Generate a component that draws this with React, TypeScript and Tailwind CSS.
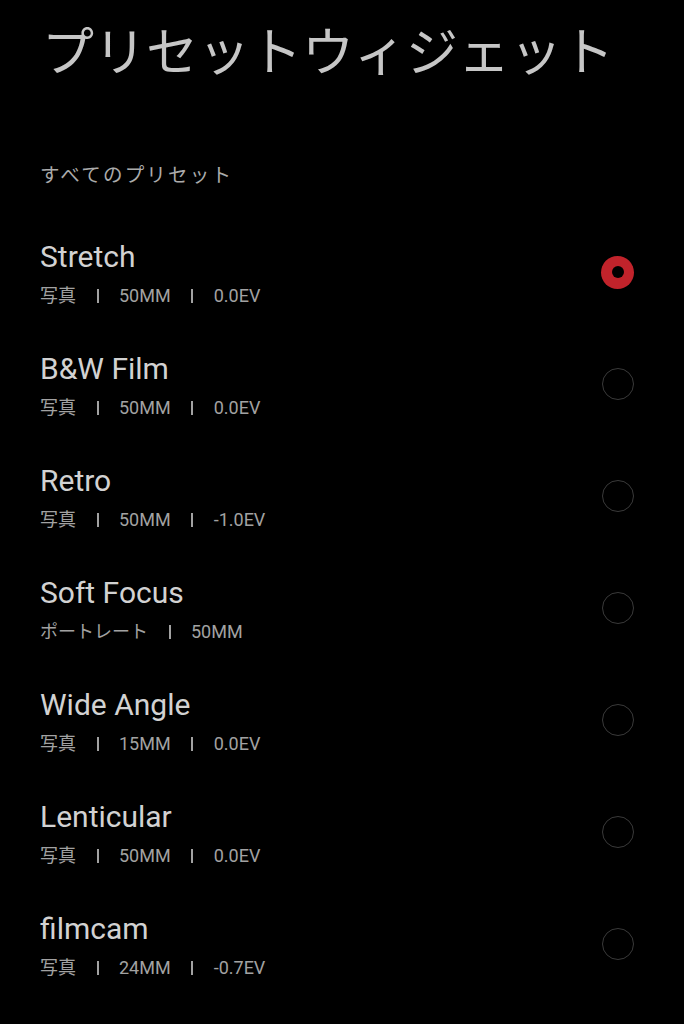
import React, { useState } from 'react';

type Preset = {
  name: string;
  tags: string[];
};

const presets: Preset[] = [
  { name: 'Stretch', tags: ['写真', '50MM', '0.0EV'] },
  { name: 'B&W Film', tags: ['写真', '50MM', '0.0EV'] },
  { name: 'Retro', tags: ['写真', '50MM', '-1.0EV'] },
  { name: 'Soft Focus', tags: ['ポートレート', '50MM'] },
  { name: 'Wide Angle', tags: ['写真', '15MM', '0.0EV'] },
  { name: 'Lenticular', tags: ['写真', '50MM', '0.0EV'] },
  { name: 'filmcam', tags: ['写真', '24MM', '-0.7EV'] },
];

const Radio = ({ checked }: { checked: boolean }) =>
  checked ? (
    <div className="w-[33px] h-[33px] rounded-full bg-[#c1232b] flex items-center justify-center">
      <div className="w-[12px] h-[12px] rounded-full bg-black" />
    </div>
  ) : (
    <div className="w-[32px] h-[32px] rounded-full border-[1.5px] border-[#3a3a3a]" />
  );

export default function App() {
  const [selected, setSelected] = useState(0);

  return (
    <div className="min-h-screen w-full bg-black font-['Roboto','Noto_Sans_CJK_JP',sans-serif] overflow-hidden">
      {/* Header */}
      <div className="h-[216px] pl-[42px] pt-[19px]">
        <h1 className="text-[52px] leading-[70px] text-[#c6c6c6] font-normal">プリセットウィジェット</h1>
        <p className="mt-[74px] ml-[-2px] text-[19.5px] leading-[26px] tracking-[2.2px] text-[#ababab]">すべてのプリセット</p>
      </div>

      {/* Preset list */}
      <div className="flex flex-col">
        {presets.map((p, i) => (
          <div
            key={p.name}
            onClick={() => setSelected(i)}
            className="h-[112px] pl-[40px] pr-[50px] flex items-center justify-between cursor-pointer"
          >
            <div className="flex flex-col pt-[2px]">
              <span className="text-[30px] leading-[36px] text-[#d2d2d2]">{p.name}</span>
              <div className="mt-[9px] flex items-center text-[18px] leading-[24px] text-[#a2a2a2]">
                {p.tags.map((t, j) => (
                  <React.Fragment key={j}>
                    {j > 0 && <span className="mx-[20.5px] w-[2px] h-[14px] bg-[#a2a2a2]" />}
                    <span>{t}</span>
                  </React.Fragment>
                ))}
              </div>
            </div>
            <Radio checked={selected === i} />
          </div>
        ))}
      </div>
    </div>
  );
}
